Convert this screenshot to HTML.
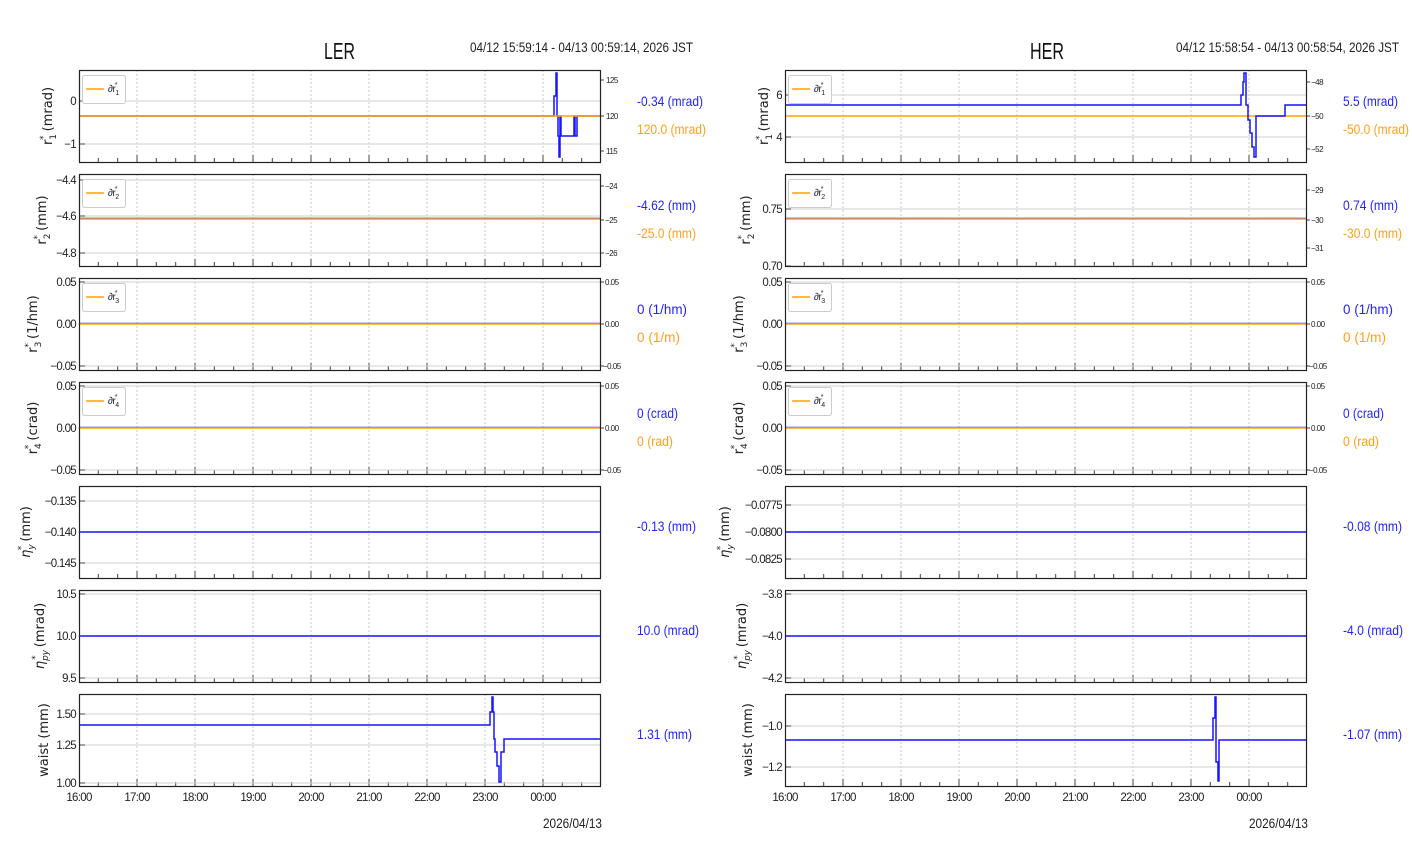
<!DOCTYPE html>
<html><head><meta charset="utf-8"><style>
html,body{margin:0;padding:0;background:#fff;width:1412px;height:864px;overflow:hidden}
svg{display:block}
.n{font-family:"Liberation Sans Narrow","Liberation Sans",sans-serif}
.t{font-size:11.5px;fill:#222;letter-spacing:-0.7px}
.s{font-size:8px;fill:#222;letter-spacing:-0.5px}
.yl{font-family:"DejaVu Sans",sans-serif;font-size:13px;fill:#222}
.b{fill:#2424ff;font-size:14px}
.o{fill:#ffa21a;font-size:14px}
</style></head><body>
<svg width="1412" height="864" viewBox="0 0 1412 864" xmlns="http://www.w3.org/2000/svg">
<defs>
<g id="vg">
<g stroke="#c8c8c8" stroke-width="1" stroke-dasharray="2,2">
<path d="M58 0V92M116 0V92M174 0V92M232 0V92M290 0V92M348 0V92M406 0V92M464 0V92"/>
</g>
<g stroke="#444" stroke-width="1">
<path d="M19.3 92v-4M38.7 92v-4M77.3 92v-4M96.7 92v-4M135.3 92v-4M154.7 92v-4M193.3 92v-4M212.7 92v-4M251.3 92v-4M270.7 92v-4M309.3 92v-4M328.7 92v-4M367.3 92v-4M386.7 92v-4M425.3 92v-4M444.7 92v-4M483.3 92v-4M502.7 92v-4"/>
<path d="M58 92v-7M116 92v-7M174 92v-7M232 92v-7M290 92v-7M348 92v-7M406 92v-7M464 92v-7"/>
</g>
</g>
<g id="box"><rect x="0.5" y="0.5" width="521" height="92" fill="none" stroke="#222" stroke-width="1.2"/></g>
</defs>

<text x="324" y="59" textLength="31" lengthAdjust="spacingAndGlyphs" class="n" font-size="23" fill="#111">LER</text>
<text x="470" y="52" textLength="223" lengthAdjust="spacingAndGlyphs" class="n" font-size="14" fill="#222">04/12 15:59:14 - 04/13 00:59:14, 2026 JST</text>
<text x="1030" y="59" textLength="34" lengthAdjust="spacingAndGlyphs" class="n" font-size="23" fill="#111">HER</text>
<text x="1176" y="52" textLength="223" lengthAdjust="spacingAndGlyphs" class="n" font-size="14" fill="#222">04/12 15:58:54 - 04/13 00:58:54, 2026 JST</text>

<g>
<use href="#vg" x="79" y="70"/><use href="#vg" x="79" y="174"/><use href="#vg" x="79" y="278"/><use href="#vg" x="79" y="382"/><use href="#vg" x="79" y="486"/><use href="#vg" x="79" y="590"/><use href="#vg" x="79" y="694"/>
<use href="#vg" x="785" y="70"/><use href="#vg" x="785" y="174"/><use href="#vg" x="785" y="278"/><use href="#vg" x="785" y="382"/><use href="#vg" x="785" y="486"/><use href="#vg" x="785" y="590"/><use href="#vg" x="785" y="694"/>
</g>

<g stroke="#d0d0d0" stroke-width="1">
<path d="M79 101H600M79 144H600M79 180H600M79 216H600M79 253H600M79 282H600M79 324H600M79 366H600M79 386H600M79 428H600M79 470H600M79 501H600M79 532H600M79 563H600M79 594H600M79 636H600M79 678H600M79 714H600M79 745H600M79 783H600"/>
<path d="M785 95H1306M785 137H1306M785 209H1306M785 266H1306M785 282H1306M785 324H1306M785 366H1306M785 386H1306M785 428H1306M785 470H1306M785 505H1306M785 532H1306M785 559H1306M785 594H1306M785 636H1306M785 678H1306M785 726H1306M785 767H1306"/>
</g>
<g stroke="#444" stroke-width="1">
<path d="M79 101h6M79 144h6M79 180h6M79 216h6M79 253h6M79 282h6M79 324h6M79 366h6M79 386h6M79 428h6M79 470h6M79 501h6M79 532h6M79 563h6M79 594h6M79 636h6M79 678h6M79 714h6M79 745h6M79 783h6"/>
<path d="M600 80h4M600 116h4M600 151h4M600 186h4M600 220h4M600 253h4M600 282h4M600 324h4M600 366h4M600 386h4M600 428h4M600 470h4"/>
<path d="M785 95h6M785 137h6M785 209h6M785 266h6M785 282h6M785 324h6M785 366h6M785 386h6M785 428h6M785 470h6M785 505h6M785 532h6M785 559h6M785 594h6M785 636h6M785 678h6M785 726h6M785 767h6"/>
<path d="M1306 82h4M1306 116h4M1306 149h4M1306 190h4M1306 220h4M1306 248h4M1306 282h4M1306 324h4M1306 366h4M1306 386h4M1306 428h4M1306 470h4"/>
</g>

<g fill="none" stroke-width="1.5">
<path stroke="#1515ff" d="M79 116H554V96H556V73H557V116H558V136H559V157H560V116H561V136H574V116H575V136H577V116H600"/>
<path stroke="#ffa500" d="M79 116H600"/>
<path stroke="#ffa500" d="M79 219H600"/>
<path stroke="#1515ff" stroke-opacity=".35" d="M79 218H600"/>
<path stroke="#ffa500" d="M79 324H600"/>
<path stroke="#1515ff" stroke-opacity=".3" d="M79 323H600"/>
<path stroke="#ffa500" d="M79 428H600"/>
<path stroke="#1515ff" stroke-opacity=".3" d="M79 427H600"/>
<path stroke="#1515ff" d="M79 532H600"/>
<path stroke="#1515ff" d="M79 636H600"/>
<path stroke="#1515ff" d="M79 725H490V712H492V697H493V712H494V739H495V752H497V766H499V782H501V752H504V739H600"/>
</g>
<g fill="none" stroke-width="1.5">
<path stroke="#ffa500" d="M785 116H1306"/>
<path stroke="#1515ff" d="M785 105H1241V95H1243V82H1244V73H1246V105H1248V120H1250V133H1252V147H1254V157H1256V116H1285V105H1306"/>
<path stroke="#ffa500" d="M785 219H1306"/>
<path stroke="#1515ff" stroke-opacity=".35" d="M785 218H1306"/>
<path stroke="#ffa500" d="M785 324H1306"/>
<path stroke="#1515ff" stroke-opacity=".3" d="M785 323H1306"/>
<path stroke="#ffa500" d="M785 428H1306"/>
<path stroke="#1515ff" stroke-opacity=".3" d="M785 427H1306"/>
<path stroke="#1515ff" d="M785 532H1306"/>
<path stroke="#1515ff" d="M785 636H1306"/>
<path stroke="#1515ff" d="M785 740H1213V718H1215V697H1216V762H1218V781H1219V740H1306"/>
</g>

<use href="#box" x="79" y="70"/><use href="#box" x="79" y="174"/><use href="#box" x="79" y="278"/><use href="#box" x="79" y="382"/><use href="#box" x="79" y="486"/><use href="#box" x="79" y="590"/><use href="#box" x="79" y="694"/>
<use href="#box" x="785" y="70"/><use href="#box" x="785" y="174"/><use href="#box" x="785" y="278"/><use href="#box" x="785" y="382"/><use href="#box" x="785" y="486"/><use href="#box" x="785" y="590"/><use href="#box" x="785" y="694"/>

<g fill="#fff" stroke="#ccc" stroke-width="1">
<rect x="82.5" y="75.5" width="43" height="28" rx="2"/><rect x="82.5" y="179.5" width="43" height="28" rx="2"/><rect x="82.5" y="283.5" width="43" height="28" rx="2"/><rect x="82.5" y="387.5" width="43" height="28" rx="2"/>
<rect x="788.5" y="75.5" width="43" height="28" rx="2"/><rect x="788.5" y="179.5" width="43" height="28" rx="2"/><rect x="788.5" y="283.5" width="43" height="28" rx="2"/><rect x="788.5" y="387.5" width="43" height="28" rx="2"/>
</g>
<g stroke="#ffa500" stroke-width="1.6">
<path d="M86 89h18M86 193h18M86 297h18M86 401h18M792 89h18M792 193h18M792 297h18M792 401h18"/>
</g>
<g class="n" font-size="10" fill="#222" letter-spacing="-0.5">
<text x="108" y="92">∂r<tspan font-size="7" dy="3">1</tspan><tspan font-size="7" dx="-4" dy="-8">*</tspan></text>
<text x="108" y="196">∂r<tspan font-size="7" dy="3">2</tspan><tspan font-size="7" dx="-4" dy="-8">*</tspan></text>
<text x="108" y="300">∂r<tspan font-size="7" dy="3">3</tspan><tspan font-size="7" dx="-4" dy="-8">*</tspan></text>
<text x="108" y="404">∂r<tspan font-size="7" dy="3">4</tspan><tspan font-size="7" dx="-4" dy="-8">*</tspan></text>
<text x="814" y="92">∂r<tspan font-size="7" dy="3">1</tspan><tspan font-size="7" dx="-4" dy="-8">*</tspan></text>
<text x="814" y="196">∂r<tspan font-size="7" dy="3">2</tspan><tspan font-size="7" dx="-4" dy="-8">*</tspan></text>
<text x="814" y="300">∂r<tspan font-size="7" dy="3">3</tspan><tspan font-size="7" dx="-4" dy="-8">*</tspan></text>
<text x="814" y="404">∂r<tspan font-size="7" dy="3">4</tspan><tspan font-size="7" dx="-4" dy="-8">*</tspan></text>
</g>

<g class="n t" text-anchor="end">
<text x="76" y="105">0</text><text x="76" y="148">−1</text>
<text x="76" y="184">−4.4</text><text x="76" y="220">−4.6</text><text x="76" y="257">−4.8</text>
<text x="76" y="286">0.05</text><text x="76" y="328">0.00</text><text x="76" y="370">−0.05</text>
<text x="76" y="390">0.05</text><text x="76" y="432">0.00</text><text x="76" y="474">−0.05</text>
<text x="76" y="505">−0.135</text><text x="76" y="536">−0.140</text><text x="76" y="567">−0.145</text>
<text x="76" y="598">10.5</text><text x="76" y="640">10.0</text><text x="76" y="682">9.5</text>
<text x="76" y="718">1.50</text><text x="76" y="749">1.25</text><text x="76" y="787">1.00</text>
</g>
<g class="n t" text-anchor="end">
<text x="782" y="99">6</text><text x="782" y="141">4</text>
<text x="782" y="213">0.75</text><text x="782" y="270">0.70</text>
<text x="782" y="286">0.05</text><text x="782" y="328">0.00</text><text x="782" y="370">−0.05</text>
<text x="782" y="390">0.05</text><text x="782" y="432">0.00</text><text x="782" y="474">−0.05</text>
<text x="782" y="509">−0.0775</text><text x="782" y="536">−0.0800</text><text x="782" y="563">−0.0825</text>
<text x="782" y="598">−3.8</text><text x="782" y="640">−4.0</text><text x="782" y="682">−4.2</text>
<text x="782" y="730">−1.0</text><text x="782" y="771">−1.2</text>
</g>
<g class="n s">
<text x="606" y="83">125</text><text x="606" y="119">120</text><text x="606" y="154">115</text>
<text x="605" y="189">−24</text><text x="605" y="223">−25</text><text x="605" y="256">−26</text>
<text x="605" y="285">0.05</text><text x="605" y="327">0.00</text><text x="603" y="369">−0.05</text>
<text x="605" y="389">0.05</text><text x="605" y="431">0.00</text><text x="603" y="473">−0.05</text>
<text x="1311" y="85">−48</text><text x="1311" y="119">−50</text><text x="1311" y="152">−52</text>
<text x="1311" y="193">−29</text><text x="1311" y="223">−30</text><text x="1311" y="251">−31</text>
<text x="1311" y="285">0.05</text><text x="1311" y="327">0.00</text><text x="1309" y="369">−0.05</text>
<text x="1311" y="389">0.05</text><text x="1311" y="431">0.00</text><text x="1309" y="473">−0.05</text>
</g>

<g class="yl" text-anchor="middle">
<text transform="translate(52,116) rotate(-90)">r<tspan font-size="9" dy="4">1</tspan><tspan font-size="9" dx="-6" dy="-10">*</tspan><tspan dy="6"> (mrad)</tspan></text>
<text transform="translate(46,220) rotate(-90)">r<tspan font-size="9" dy="4">2</tspan><tspan font-size="9" dx="-6" dy="-10">*</tspan><tspan dy="6"> (mm)</tspan></text>
<text transform="translate(37,324) rotate(-90)">r<tspan font-size="9" dy="4">3</tspan><tspan font-size="9" dx="-6" dy="-10">*</tspan><tspan dy="6"> (1/hm)</tspan></text>
<text transform="translate(37,428) rotate(-90)">r<tspan font-size="9" dy="4">4</tspan><tspan font-size="9" dx="-6" dy="-10">*</tspan><tspan dy="6"> (crad)</tspan></text>
<text transform="translate(30,532) rotate(-90)"><tspan font-style="italic">η</tspan><tspan font-size="9" dy="4" font-style="italic">y</tspan><tspan font-size="9" dx="-6" dy="-10">*</tspan><tspan dy="6"> (mm)</tspan></text>
<text transform="translate(44,636) rotate(-90)"><tspan font-style="italic">η</tspan><tspan font-size="9" dy="4" font-style="italic">py</tspan><tspan font-size="9" dx="-10" dy="-10">*</tspan><tspan dx="4" dy="6"> (mrad)</tspan></text>
<text transform="translate(48,740) rotate(-90)">waist (mm)</text>
<text transform="translate(768,116) rotate(-90)">r<tspan font-size="9" dy="4">1</tspan><tspan font-size="9" dx="-6" dy="-10">*</tspan><tspan dy="6"> (mrad)</tspan></text>
<text transform="translate(750,220) rotate(-90)">r<tspan font-size="9" dy="4">2</tspan><tspan font-size="9" dx="-6" dy="-10">*</tspan><tspan dy="6"> (mm)</tspan></text>
<text transform="translate(743,324) rotate(-90)">r<tspan font-size="9" dy="4">3</tspan><tspan font-size="9" dx="-6" dy="-10">*</tspan><tspan dy="6"> (1/hm)</tspan></text>
<text transform="translate(743,428) rotate(-90)">r<tspan font-size="9" dy="4">4</tspan><tspan font-size="9" dx="-6" dy="-10">*</tspan><tspan dy="6"> (crad)</tspan></text>
<text transform="translate(729,532) rotate(-90)"><tspan font-style="italic">η</tspan><tspan font-size="9" dy="4" font-style="italic">y</tspan><tspan font-size="9" dx="-6" dy="-10">*</tspan><tspan dy="6"> (mm)</tspan></text>
<text transform="translate(746,636) rotate(-90)"><tspan font-style="italic">η</tspan><tspan font-size="9" dy="4" font-style="italic">py</tspan><tspan font-size="9" dx="-10" dy="-10">*</tspan><tspan dx="4" dy="6"> (mrad)</tspan></text>
<text transform="translate(752,740) rotate(-90)">waist (mm)</text>
</g>

<g class="n" lengthAdjust="spacingAndGlyphs">
<text x="637" y="106" class="b" textLength="66" lengthAdjust="spacingAndGlyphs">-0.34 (mrad)</text><text x="637" y="134" class="o" textLength="69" lengthAdjust="spacingAndGlyphs">120.0 (mrad)</text>
<text x="637" y="210" class="b" textLength="59" lengthAdjust="spacingAndGlyphs">-4.62 (mm)</text><text x="637" y="238" class="o" textLength="59" lengthAdjust="spacingAndGlyphs">-25.0 (mm)</text>
<text x="637" y="314" class="b" textLength="50" lengthAdjust="spacingAndGlyphs">0 (1/hm)</text><text x="637" y="342" class="o" textLength="43" lengthAdjust="spacingAndGlyphs">0 (1/m)</text>
<text x="637" y="418" class="b" textLength="41" lengthAdjust="spacingAndGlyphs">0 (crad)</text><text x="637" y="446" class="o" textLength="36" lengthAdjust="spacingAndGlyphs">0 (rad)</text>
<text x="637" y="531" class="b" textLength="59" lengthAdjust="spacingAndGlyphs">-0.13 (mm)</text>
<text x="637" y="635" class="b" textLength="62" lengthAdjust="spacingAndGlyphs">10.0 (mrad)</text>
<text x="637" y="739" class="b" textLength="55" lengthAdjust="spacingAndGlyphs">1.31 (mm)</text>
<text x="1343" y="106" class="b" textLength="55" lengthAdjust="spacingAndGlyphs">5.5 (mrad)</text><text x="1343" y="134" class="o" textLength="66" lengthAdjust="spacingAndGlyphs">-50.0 (mrad)</text>
<text x="1343" y="210" class="b" textLength="55" lengthAdjust="spacingAndGlyphs">0.74 (mm)</text><text x="1343" y="238" class="o" textLength="59" lengthAdjust="spacingAndGlyphs">-30.0 (mm)</text>
<text x="1343" y="314" class="b" textLength="50" lengthAdjust="spacingAndGlyphs">0 (1/hm)</text><text x="1343" y="342" class="o" textLength="43" lengthAdjust="spacingAndGlyphs">0 (1/m)</text>
<text x="1343" y="418" class="b" textLength="41" lengthAdjust="spacingAndGlyphs">0 (crad)</text><text x="1343" y="446" class="o" textLength="36" lengthAdjust="spacingAndGlyphs">0 (rad)</text>
<text x="1343" y="531" class="b" textLength="59" lengthAdjust="spacingAndGlyphs">-0.08 (mm)</text>
<text x="1343" y="635" class="b" textLength="60" lengthAdjust="spacingAndGlyphs">-4.0 (mrad)</text>
<text x="1343" y="739" class="b" textLength="59" lengthAdjust="spacingAndGlyphs">-1.07 (mm)</text>
</g>

<g class="n t" text-anchor="middle">
<text x="79" y="801">16:00</text><text x="137" y="801">17:00</text><text x="195" y="801">18:00</text><text x="253" y="801">19:00</text><text x="311" y="801">20:00</text><text x="369" y="801">21:00</text><text x="427" y="801">22:00</text><text x="485" y="801">23:00</text><text x="543" y="801">00:00</text>
<text x="785" y="801">16:00</text><text x="843" y="801">17:00</text><text x="901" y="801">18:00</text><text x="959" y="801">19:00</text><text x="1017" y="801">20:00</text><text x="1075" y="801">21:00</text><text x="1133" y="801">22:00</text><text x="1191" y="801">23:00</text><text x="1249" y="801">00:00</text>
</g>
<text x="543" y="828" textLength="59" lengthAdjust="spacingAndGlyphs" class="n" font-size="14" fill="#222">2026/04/13</text>
<text x="1249" y="828" textLength="59" lengthAdjust="spacingAndGlyphs" class="n" font-size="14" fill="#222">2026/04/13</text>
</svg>
</body></html>
